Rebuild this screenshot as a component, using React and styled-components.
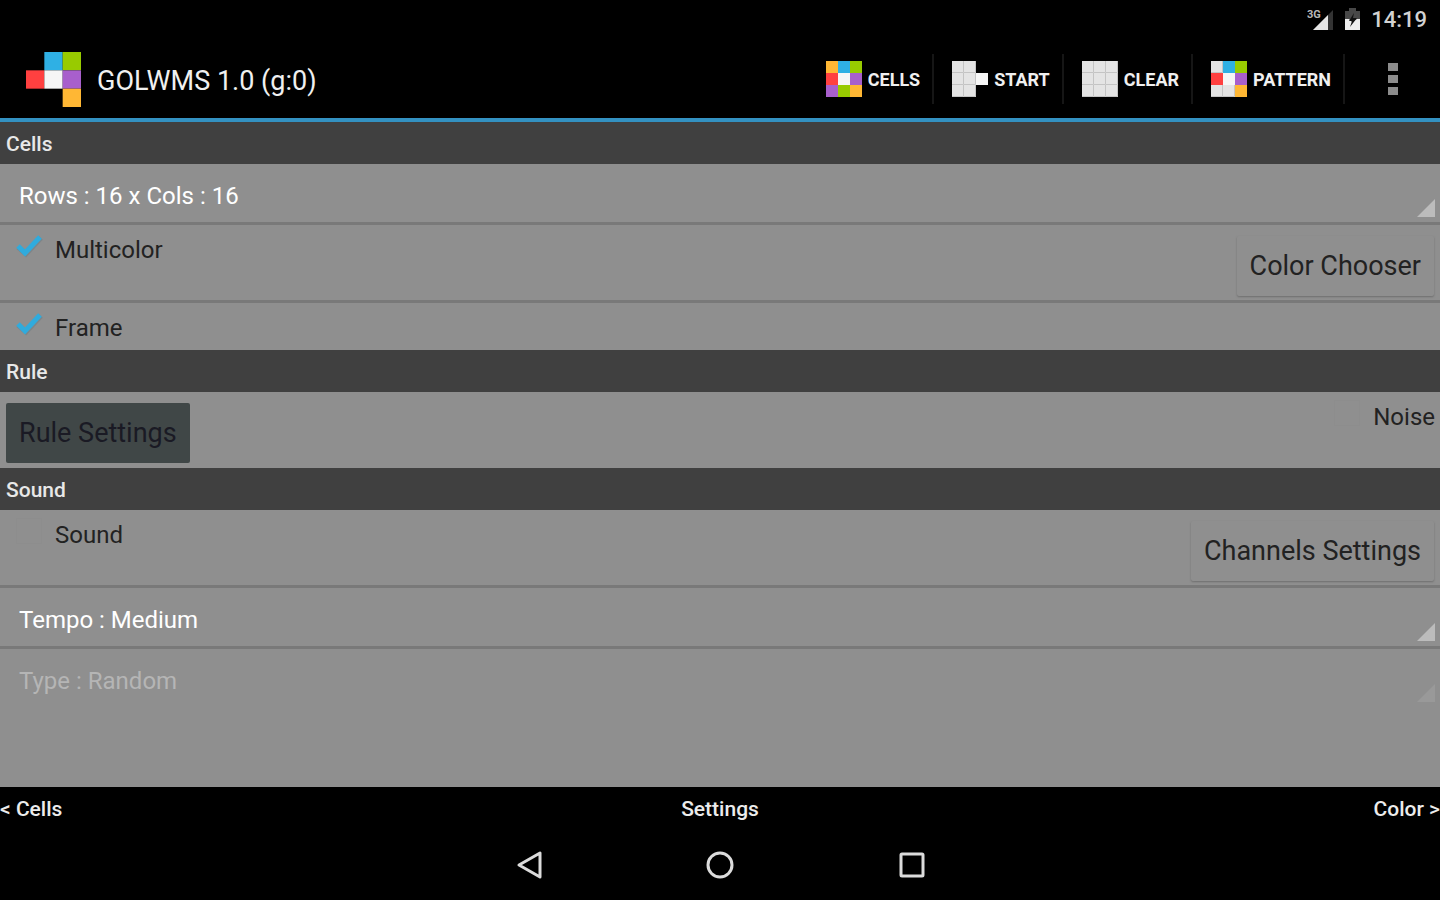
import React, { useState } from 'react';
import styled, { createGlobalStyle } from 'styled-components';

const BLUE = '#2fb0e4';
const GREEN = '#98cb00';
const RED = '#ff4040';
const PURPLE = '#a85fcc';
const ORANGE = '#ffb734';
const LIGHT = '#e4e4e4';
const WHITE = '#f6f6f6';

const GlobalStyle = createGlobalStyle`
  * {
    box-sizing: border-box;
  }

  body {
    margin: 0;
    background: #000;
    font-family: Roboto, "Liberation Sans", sans-serif;
  }

  button, select, input {
    margin: 0;
    font-family: inherit;
  }
`;

const Screen = styled.div`
  display: flex;
  flex-direction: column;
  min-height: 100vh;
  background: #000;
  color: #f0f0f0;
`;

const StatusBar = styled.div`
  display: flex;
  align-items: center;
  justify-content: flex-end;
  gap: 11px;
  height: 40px;
  padding-right: 13px;
`;

const Clock = styled.time`
  color: #d2d2d2;
  font-size: 22px;
  font-weight: 500;
  line-height: 24px;
`;

const ActionBar = styled.header`
  display: flex;
  align-items: center;
  height: 82px;
  padding-left: 26px;
  border-bottom: 4px solid #3391c1;
`;

const Title = styled.h1`
  flex: 1;
  margin: 0 0 0 16px;
  padding-top: 4px;
  font-size: 27px;
  font-weight: 400;
  line-height: 32px;
`;

const Action = styled.button`
  display: flex;
  align-items: center;
  gap: 6px;
  height: 50px;
  padding: 0 12px 0 18px;
  border: 0;
  border-right: 2px solid #161616;
  background: none;
  color: #f0f0f0;
  font-size: 18px;
  font-weight: 700;
`;

const Overflow = styled.button`
  display: flex;
  justify-content: center;
  width: 95px;
  padding: 0;
  border: 0;
  background: none;
`;

const Panel = styled.main`
  display: flex;
  flex: 1;
  flex-direction: column;
  background: #8f8f8f;
`;

const SectionTitle = styled.h2`
  height: 42px;
  margin: 0;
  padding-left: 6px;
  background: #404040;
  color: #e8e8e8;
  font-size: 21px;
  font-weight: 500;
  line-height: 44px;
`;

const Row = styled.div`
  display: flex;
  align-items: flex-start;
  justify-content: space-between;
  height: ${(props) => props.$height}px;
  padding: 0 6px;
  border-bottom: ${(props) => (props.$line ? '3px solid #797979' : '0')};
`;

const SpinnerRow = styled.div`
  display: grid;
  height: ${(props) => (props.$line ? 61 : 58)}px;
  padding-right: 5px;
  border-bottom: ${(props) => (props.$line ? '3px solid #797979' : '0')};
`;

const Spinner = styled.select`
  grid-area: 1 / 1;
  width: 100%;
  height: 58px;
  padding: 5px 19px 0;
  border: 0;
  appearance: none;
  background: none;
  color: #fff;
  font-size: 24px;
  opacity: 1;

  &:disabled {
    color: #b5b5b5;
  }

  option {
    color: #222;
  }
`;

const Corner = styled.svg`
  grid-area: 1 / 1;
  align-self: end;
  justify-self: end;
  margin-bottom: 5px;
  pointer-events: none;
`;

const CheckLabel = styled.label`
  display: flex;
  gap: 7px;
  padding-left: ${(props) => (props.$end ? 0 : 4)}px;
  margin-right: ${(props) => (props.$end ? -1 : 0)}px;
  color: #222;
  font-size: 24px;
  line-height: 50px;
`;

const CheckCell = styled.span`
  display: grid;
  place-items: center;
  width: 38px;
  height: 42px;
`;

const CheckInput = styled.input`
  grid-area: 1 / 1;
  width: 26px;
  height: 26px;
  appearance: none;
  border: 1px solid #8d8d8d;

  &:checked {
    border-color: transparent;
  }
`;

const CheckMark = styled.svg`
  grid-area: 1 / 1;
  pointer-events: none;
`;

const PanelButton = styled.button`
  height: 60px;
  margin-top: 11px;
  padding: 0 13px;
  border: 0;
  border-radius: 2px;
  background: ${(props) => (props.$dark ? '#404747' : '#8f8f8f')};
  box-shadow: ${(props) => (props.$dark ? 'none' : '0 1px 2px #6f6f6f')};
  color: ${(props) => (props.$dark ? '#1a1a24' : '#222')};
  font-size: 27px;
`;

const Pager = styled.nav`
  display: grid;
  grid-template-columns: 1fr auto 1fr;
  height: 43px;

  a:last-child {
    text-align: right;
  }
`;

const PagerLink = styled.a`
  color: #ececec;
  font-size: 21px;
  font-weight: 500;
  line-height: 44px;
  text-decoration: none;
`;

const NavBar = styled.div`
  display: flex;
  align-items: center;
  justify-content: center;
  gap: 144px;
  height: 70px;
`;

const NavButton = styled.button`
  display: flex;
  align-items: center;
  justify-content: center;
  width: 48px;
  height: 48px;
  padding: 0;
  border: 0;
  background: none;
`;

const CELLS = [ORANGE, BLUE, GREEN, RED, WHITE, PURPLE, PURPLE, GREEN, ORANGE];
const START = [LIGHT, LIGHT, null, LIGHT, LIGHT, WHITE, LIGHT, LIGHT, null];
const CLEAR = Array(9).fill(LIGHT);
const PATTERN = [LIGHT, BLUE, GREEN, RED, WHITE, PURPLE, LIGHT, LIGHT, ORANGE];
const LOGO = [null, BLUE, GREEN, RED, WHITE, PURPLE, null, null, ORANGE];

function CellGrid({ colors, size }) {
  return (
    <svg width={size} height={size} viewBox="0 0 36 36" aria-hidden="true">
      {colors.map((color, i) => {
        const x = (i % 3) * 12;
        const y = Math.floor(i / 3) * 12;
        if (!color) return null;
        return (
          <g key={i}>
            <rect x={x} y={y} width="12" height="12" fill={color} />
            {color === LIGHT && (
              <path d={`M${x + 11.5} ${y}v11.5h-11.5`} fill="none" stroke="#c4c4c4" />
            )}
          </g>
        );
      })}
    </svg>
  );
}

function SignalIcon() {
  return (
    <svg width="27" height="24" viewBox="0 0 27 24" aria-hidden="true">
      <path d="M26 2v20H6z" fill="#333" />
      <path d="M21 7v15H6z" fill="#e6e6e6" />
      <text x="0" y="10" fill="#b8b8b8" fontSize="11" fontWeight="700">3G</text>
    </svg>
  );
}

function BatteryIcon() {
  return (
    <svg width="15" height="24" viewBox="0 0 15 24" aria-hidden="true">
      <path d="M4 0h7v3h4v19H0V3h4z" fill="#484848" />
      <path d="M0 11h4l3 3 5-3h3v11H0z" fill="#ededed" />
      <path d="M9 5l-5 8h3l-2 6 7-9H8z" fill="#111" />
    </svg>
  );
}

function Check({ label, defaultChecked, end }) {
  const [checked, setChecked] = useState(!!defaultChecked);
  return (
    <CheckLabel $end={end}>
      <CheckCell>
        <CheckInput
          type="checkbox"
          checked={checked}
          onChange={(e) => setChecked(e.target.checked)}
        />
        {checked && (
          <CheckMark width="28" height="24" viewBox="0 0 28 24" aria-hidden="true">
            <path d="M3 13l8 7L26 4" fill="none" stroke="#7d8589" strokeWidth="5" />
            <path d="M3 12l7 7L25 3" fill="none" stroke="#30abdd" strokeWidth="5" />
          </CheckMark>
        )}
      </CheckCell>
      {label}
    </CheckLabel>
  );
}

function Dropdown({ name, value, line, disabled }) {
  return (
    <SpinnerRow $line={line}>
      <Spinner aria-label={name} disabled={disabled}>
        <option>{value}</option>
      </Spinner>
      <Corner width="18" height="18" viewBox="0 0 18 18" aria-hidden="true">
        <path d="M18 0v18H0z" fill={disabled ? '#999' : '#bcbcbc'} />
      </Corner>
    </SpinnerRow>
  );
}

function App() {
  return (
    <Screen>
      <GlobalStyle />
      <StatusBar>
        <SignalIcon />
        <BatteryIcon />
        <Clock>14:19</Clock>
      </StatusBar>

      <ActionBar>
        <CellGrid colors={LOGO} size={55} />
        <Title>GOLWMS 1.0 (g:0)</Title>
        <Action><CellGrid colors={CELLS} size={36} />CELLS</Action>
        <Action><CellGrid colors={START} size={36} />START</Action>
        <Action><CellGrid colors={CLEAR} size={36} />CLEAR</Action>
        <Action><CellGrid colors={PATTERN} size={36} />PATTERN</Action>
        <Overflow aria-label="More options">
          <svg width="10" height="32" viewBox="0 0 10 32" aria-hidden="true">
            <path d="M0 0h10v8H0zM0 12h10v8H0zM0 24h10v8H0z" fill="#8c8c8c" />
          </svg>
        </Overflow>
      </ActionBar>

      <Panel>
        <SectionTitle>Cells</SectionTitle>
        <Dropdown name="Grid size" value="Rows : 16 x Cols : 16" line />
        <Row $height={78} $line>
          <Check label="Multicolor" defaultChecked />
          <PanelButton>Color Chooser</PanelButton>
        </Row>
        <Row $height={47}>
          <Check label="Frame" defaultChecked />
        </Row>

        <SectionTitle>Rule</SectionTitle>
        <Row $height={76}>
          <PanelButton $dark>Rule Settings</PanelButton>
          <Check label="Noise" end />
        </Row>

        <SectionTitle>Sound</SectionTitle>
        <Row $height={78} $line>
          <Check label="Sound" />
          <PanelButton>Channels Settings</PanelButton>
        </Row>
        <Dropdown name="Tempo" value="Tempo : Medium" line />
        <Dropdown name="Type" value="Type : Random" disabled />
      </Panel>

      <Pager>
        <PagerLink href="#cells">&lt; Cells</PagerLink>
        <PagerLink href="#settings">Settings</PagerLink>
        <PagerLink href="#color">Color &gt;</PagerLink>
      </Pager>

      <NavBar>
        <NavButton aria-label="Back">
          <svg width="30" height="30" viewBox="0 0 30 30" aria-hidden="true">
            <path d="M27 3v24L6 15z" fill="none" stroke="#dcdcdc" strokeWidth="3" strokeLinejoin="round" />
          </svg>
        </NavButton>
        <NavButton aria-label="Home">
          <svg width="30" height="30" viewBox="0 0 30 30" aria-hidden="true">
            <circle cx="15" cy="15" r="12" fill="none" stroke="#dcdcdc" strokeWidth="3" />
          </svg>
        </NavButton>
        <NavButton aria-label="Recent apps">
          <svg width="30" height="30" viewBox="0 0 30 30" aria-hidden="true">
            <rect x="4" y="4" width="22" height="22" rx="1" fill="none" stroke="#dcdcdc" strokeWidth="3" />
          </svg>
        </NavButton>
      </NavBar>
    </Screen>
  );
}

export default App;
